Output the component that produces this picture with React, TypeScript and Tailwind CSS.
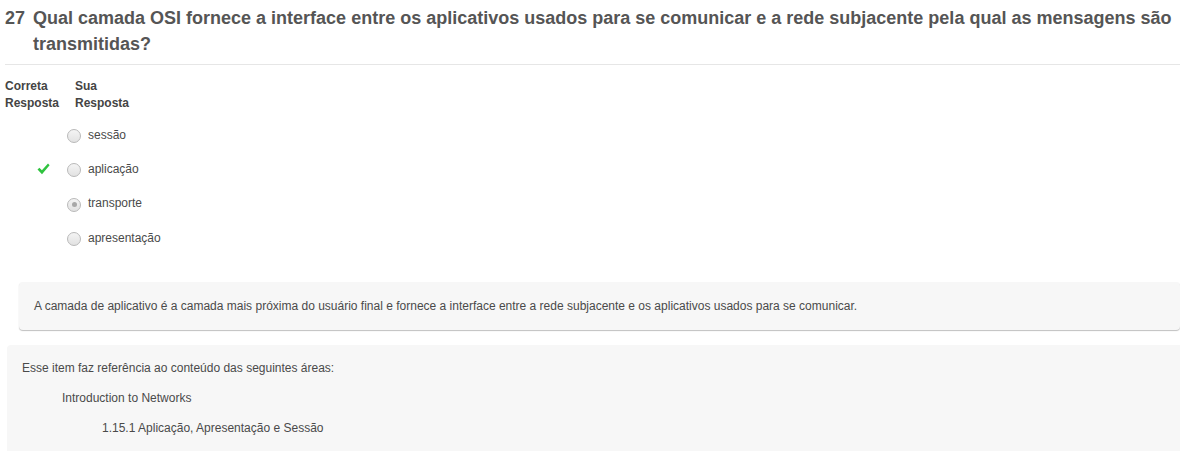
import React from "react";

// Quiz review item: question, answer columns, feedback and references

type Option = { label: string; correct?: boolean; chosen?: boolean };

const options: Option[] = [
  { label: "sessão" },
  { label: "aplicação", correct: true },
  { label: "transporte", chosen: true },
  { label: "apresentação" },
];

const Radio = ({ chosen }: { chosen?: boolean }) => (
  <span className="flex h-[14px] w-[14px] items-center justify-center rounded-full border border-[#b9b9b9] bg-gradient-to-b from-[#f4f4f4] to-[#e2e2e2]">
    {chosen && <span className="h-[5px] w-[5px] rounded-full bg-[#a8a8a8]" />}
  </span>
);

// heavy check mark, like the ✔ glyph
const Check = () => (
  <svg width="13" height="12" viewBox="0 0 13 12">
    <path d="M0.5 6.6 L2.4 4.7 L4.9 7.3 L11 0.6 L12.6 2.3 L5 11.2 Z" fill="#2fc33f" />
  </svg>
);

export default function App() {
  return (
    <div className="w-[1180px] bg-white font-['Liberation_Sans',Arial,sans-serif] text-[#4a4a4a]">
      {/* Question */}
      <div className="pl-[5px]">
        <div className="flex pt-[5px] pb-[7px] text-[18px] font-bold leading-[26px] text-[#555]">
          <span className="w-[28px] shrink-0">27</span>
          <span>
            Qual camada OSI fornece a interface entre os aplicativos usados para se comunicar e a rede subjacente pela qual as mensagens são transmitidas?
          </span>
        </div>
        <div className="border-t border-[#e6e6e6]" />
      </div>

      {/* Answers */}
      <div className="flex pl-[5px] pt-[13px] text-[12px] font-bold leading-[17px] text-[#444]">
        <div className="w-[70px]">
          Correta
          <br />
          Resposta
        </div>
        <div>
          Sua
          <br />
          Resposta
        </div>
      </div>
      <div className="mt-[7px] flex flex-col">
        {options.map((o) => (
          <div key={o.label} className="flex h-[34.3px] items-center text-[12px]">
            <div className="flex w-[67px] justify-end pr-[17px] -mt-[3px]">{o.correct && <Check />}</div>
            <Radio chosen={o.chosen} />
            <span className="ml-[7px] -mt-[3px]">{o.label}</span>
          </div>
        ))}
      </div>

      {/* Feedback */}
      <div className="mt-[26px] ml-[19px] flex h-[48px] items-center rounded-[4px] bg-[#f7f7f7] pl-[15px] text-[12px] shadow-[0_1px_1px_rgba(0,0,0,0.25)]">
        A camada de aplicativo é a camada mais próxima do usuário final e fornece a interface entre a rede subjacente e os aplicativos usados para se comunicar.
      </div>

      {/* References */}
      <div className="mt-[15px] ml-[7px] rounded-tl-[4px] bg-[#f7f7f7] py-[8px] text-[12px] leading-[30px]">
        <div className="pl-[15px]">Esse item faz referência ao conteúdo das seguintes áreas:</div>
        <div className="pl-[55px]">Introduction to Networks</div>
        <div className="pl-[95px]">1.15.1 Aplicação, Apresentação e Sessão</div>
      </div>
    </div>
  );
}
